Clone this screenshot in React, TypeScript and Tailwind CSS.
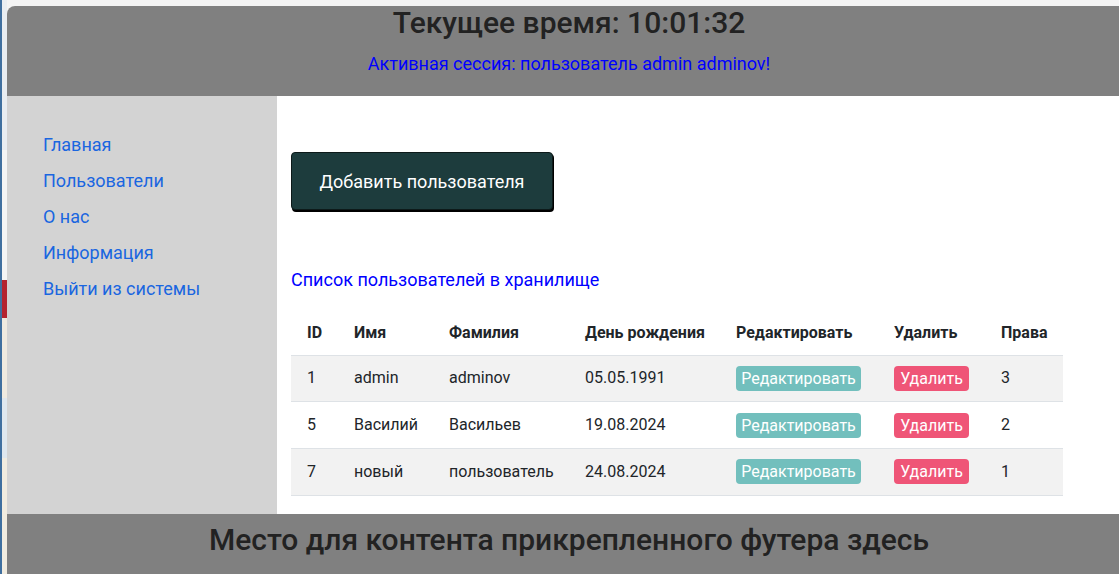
import React from 'react'

const users = [
  { id: 1, name: 'admin', surname: 'adminov', birth: '05.05.1991', rights: 3 },
  { id: 5, name: 'Василий', surname: 'Васильев', birth: '19.08.2024', rights: 2 },
  { id: 7, name: 'новый', surname: 'пользователь', birth: '24.08.2024', rights: 1 },
]

const links = ['Главная', 'Пользователи', 'О нас', 'Информация', 'Выйти из системы']

const cols = [47, 95, 136, 151, 158, 107, 78]

function DesktopEdge() {
  // bit of the desktop peeking out left of the browser window
  return (
    <div className="flex w-[7px] shrink-0 flex-col border-l-2 border-[#3f6f9f] bg-[#eceff2]">
      <div className="h-[150px] bg-[#e9edf1]" />
      <div className="h-[130px] bg-[#f4f4f4]" />
      <div className="h-[38px] bg-[#b4232f]" />
      <div className="h-[80px] bg-[#efeae0]" />
      <div className="h-[60px] bg-[#dfe7ee]" />
      <div className="flex-1 bg-[#f1ece0]" />
    </div>
  )
}

export default function App() {
  return (
    <div className="flex h-[574px] w-[1119px] overflow-hidden bg-[#f3f3f3] font-['Roboto','Liberation_Sans',sans-serif] text-[#212529]">
      <DesktopEdge />
      <div className="flex flex-col pt-[6px]">
        <div className="flex w-[1124px] flex-1 flex-col overflow-hidden rounded-tl-lg bg-white">
          <header className="h-[90px] shrink-0 bg-[#808080] text-center">
            <h1 className="text-[30px] font-medium leading-[34px] text-[#222]">Текущее время: 10:01:32</h1>
            <p className="mt-[10px] text-[18px] leading-[27px] text-[#0000ff]">
              Активная сессия: пользователь admin adminov!
            </p>
          </header>

          <div className="flex flex-1">
            <nav className="w-[270px] shrink-0 bg-[#d3d3d3] pl-[36px] pt-[36px]">
              <ul className="flex flex-col">
                {links.map((l) => (
                  <li key={l} className="h-[36px] text-[18px] leading-[26px] text-[#1a66e0]">
                    {l}
                  </li>
                ))}
              </ul>
            </nav>

            <main className="flex-1 pl-[14px] pt-[56px]">
              <button className="h-[58px] w-[262px] rounded-[4px] border border-[#0d1a1a] bg-[#1d3c3d] text-[18px] text-white shadow-[1px_2px_0_#000]">
                Добавить пользователя
              </button>

              <h2 className="mt-[56px] text-[18px] leading-[27px] text-[#0000ff]">Список пользователей в хранилище</h2>

              <table className="mt-[19px] w-[772px] table-fixed border-collapse text-[16px]">
                <colgroup>
                  {cols.map((w, i) => (
                    <col key={i} style={{ width: w }} />
                  ))}
                </colgroup>
                <thead>
                  <tr className="h-[43px] text-left font-bold">
                    <th className="pl-[16px]">ID</th>
                    <th className="pl-[16px]">Имя</th>
                    <th className="pl-[16px]">Фамилия</th>
                    <th className="pl-[16px]">День рождения</th>
                    <th className="pl-[16px]">Редактировать</th>
                    <th className="pl-[16px]">Удалить</th>
                    <th className="pl-[16px]">Права</th>
                  </tr>
                </thead>
                <tbody>
                  {users.map((u, i) => (
                    <tr
                      key={u.id}
                      className={`h-[46.7px] border-y border-[#dee2e6] ${i % 2 === 0 ? 'bg-[#f2f2f2]' : 'bg-white'}`}
                    >
                      <td className="pl-[16px]">{u.id}</td>
                      <td className="pl-[16px]">{u.name}</td>
                      <td className="pl-[16px]">{u.surname}</td>
                      <td className="pl-[16px]">{u.birth}</td>
                      <td className="pl-[16px]">
                        <span className="inline-block h-[25px] w-[125px] rounded-[4px] bg-[#72bfbd] text-center leading-[25px] text-white">
                          Редактировать
                        </span>
                      </td>
                      <td className="pl-[16px]">
                        <span className="inline-block h-[25px] w-[75px] rounded-[4px] bg-[#ef5577] text-center leading-[25px] text-white">
                          Удалить
                        </span>
                      </td>
                      <td className="pl-[16px]">{u.rights}</td>
                    </tr>
                  ))}
                </tbody>
              </table>
            </main>
          </div>

          <footer className="h-[60px] shrink-0 bg-[#808080] text-center">
            <p className="text-[30px] font-medium leading-[52px] text-[#222]">
              Место для контента прикрепленного футера здесь
            </p>
          </footer>
        </div>
      </div>
    </div>
  )
}
